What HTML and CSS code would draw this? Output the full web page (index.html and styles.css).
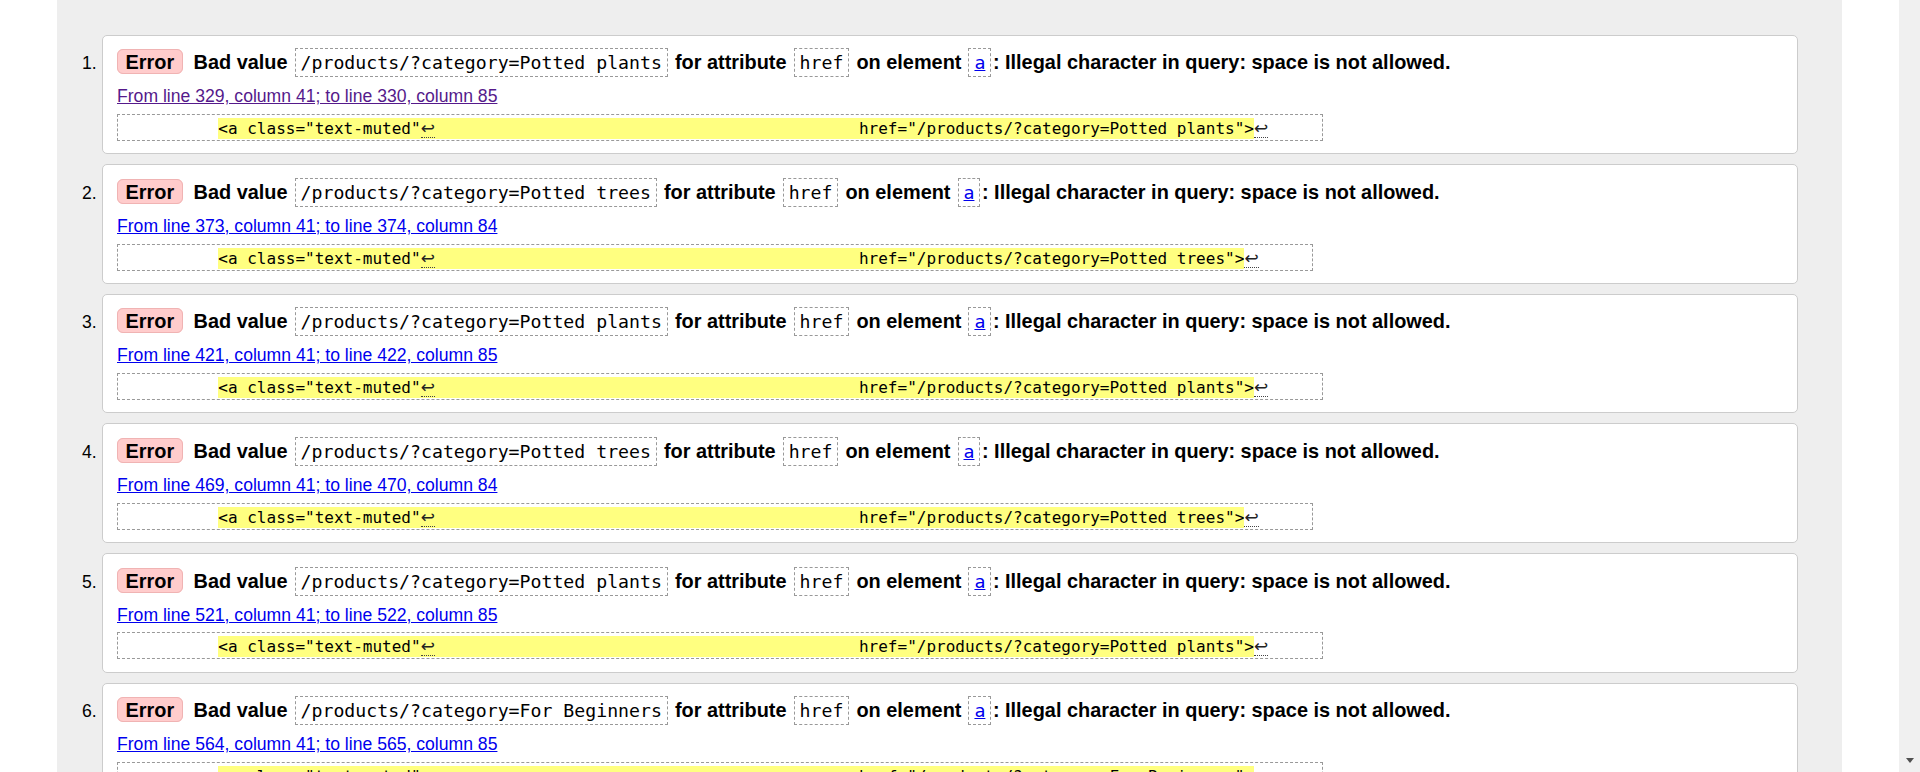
FILE: index.html
```html
<!DOCTYPE html>
<html lang="en">
<head>
<meta charset="utf-8">
<title>Nu Html Checker results</title>
<link rel="stylesheet" href="styles.css">
</head>
<body>
<div class="viewport">
  <div class="page">
    <div class="results">
      <ol class="msgs">
        <li class="msg">
          <p class="message"><span class="badge">Error</span> Bad value <code class="val">/products/?category=Potted plants</code> for attribute <code class="val">href</code> on element <code class="val"><a href="#">a</a></code>: Illegal character in query: space is not allowed.</p>
          <p class="location"><a class="loc visited" href="#">From line 329, column 41; to line 330, column 85</a></p>
          <code class="extract">          <mark>&lt;a class="text-muted"<span class="lf">↩</span>                                            href="/products/?category=Potted plants"&gt;</mark><span class="lf">↩</span>     </code>
        </li>
        <li class="msg">
          <p class="message"><span class="badge">Error</span> Bad value <code class="val">/products/?category=Potted trees</code> for attribute <code class="val">href</code> on element <code class="val"><a href="#">a</a></code>: Illegal character in query: space is not allowed.</p>
          <p class="location"><a class="loc" href="#">From line 373, column 41; to line 374, column 84</a></p>
          <code class="extract">          <mark>&lt;a class="text-muted"<span class="lf">↩</span>                                            href="/products/?category=Potted trees"&gt;</mark><span class="lf">↩</span>     </code>
        </li>
        <li class="msg">
          <p class="message"><span class="badge">Error</span> Bad value <code class="val">/products/?category=Potted plants</code> for attribute <code class="val">href</code> on element <code class="val"><a href="#">a</a></code>: Illegal character in query: space is not allowed.</p>
          <p class="location"><a class="loc" href="#">From line 421, column 41; to line 422, column 85</a></p>
          <code class="extract">          <mark>&lt;a class="text-muted"<span class="lf">↩</span>                                            href="/products/?category=Potted plants"&gt;</mark><span class="lf">↩</span>     </code>
        </li>
        <li class="msg">
          <p class="message"><span class="badge">Error</span> Bad value <code class="val">/products/?category=Potted trees</code> for attribute <code class="val">href</code> on element <code class="val"><a href="#">a</a></code>: Illegal character in query: space is not allowed.</p>
          <p class="location"><a class="loc" href="#">From line 469, column 41; to line 470, column 84</a></p>
          <code class="extract">          <mark>&lt;a class="text-muted"<span class="lf">↩</span>                                            href="/products/?category=Potted trees"&gt;</mark><span class="lf">↩</span>     </code>
        </li>
        <li class="msg">
          <p class="message"><span class="badge">Error</span> Bad value <code class="val">/products/?category=Potted plants</code> for attribute <code class="val">href</code> on element <code class="val"><a href="#">a</a></code>: Illegal character in query: space is not allowed.</p>
          <p class="location"><a class="loc" href="#">From line 521, column 41; to line 522, column 85</a></p>
          <code class="extract">          <mark>&lt;a class="text-muted"<span class="lf">↩</span>                                            href="/products/?category=Potted plants"&gt;</mark><span class="lf">↩</span>     </code>
        </li>
        <li class="msg">
          <p class="message"><span class="badge">Error</span> Bad value <code class="val">/products/?category=For Beginners</code> for attribute <code class="val">href</code> on element <code class="val"><a href="#">a</a></code>: Illegal character in query: space is not allowed.</p>
          <p class="location"><a class="loc" href="#">From line 564, column 41; to line 565, column 85</a></p>
          <code class="extract">          <mark>&lt;a class="text-muted"<span class="lf">↩</span>                                            href="/products/?category=For Beginners"&gt;</mark><span class="lf">↩</span>     </code>
        </li>
      </ol>
    </div>
  </div>
  <div class="scrollbar"><span class="arrow-down"></span></div>
</div>
</body>
</html>
```

FILE: styles.css
```css
html, body {
  margin: 0;
  padding: 0;
  background: #fff;
}

body {
  font-family: "Liberation Sans", Arial, sans-serif;
  color: #000;
}

.viewport {
  display: flex;
  height: 772px;
  overflow: hidden;
}

.page {
  flex: 0 0 1899px;
  height: 772px;
  overflow: hidden;
}

.results {
  margin-left: 57px;
  width: 1785px;
  height: 100%;
  box-sizing: border-box;
  padding: 34.67px 44.5px 0 44.5px;
  background: #eeeeee;
}

.msgs {
  margin: 0;
  padding: 0;
  list-style: decimal outside;
}

.msg {
  background: #fff;
  border: 1px solid #cccccc;
  border-radius: 5px;
  padding: 12.46px 14.5px 12.3px 14.5px;
  margin: 0 0 10px 0;
  font-size: 17.6px;
  line-height: 24px;
}

.message {
  margin: 0;
  font-size: 19.9px;
  font-weight: bold;
  line-height: 28px;
  white-space: nowrap;
}

.badge {
  background: #ffcccc;
  border: 1px solid #f0b3b3;
  border-radius: 6px;
  padding: 1px 7.5px 0 7.5px;
  margin-right: 5.4px;
}

.val {
  font-family: "DejaVu Sans Mono", "Liberation Mono", monospace;
  font-size: 18.2px;
  font-weight: normal;
  line-height: 1;
  border: 1px dashed #999;
  padding: 3px 5px;
  margin: 0 1.5px;
}

.val a {
  color: #0000ee;
  text-decoration: underline;
}

.location {
  margin: 8px 0 0 0;
  font-size: 17.6px;
  line-height: 24px;
}

.loc {
  color: #0000ee;
  text-decoration: underline;
}

.loc.visited {
  color: #551a8b;
}

.extract {
  display: block;
  width: fit-content;
  margin-top: 5.87px;
  font-family: "DejaVu Sans Mono", "Liberation Mono", monospace;
  font-size: 16px;
  line-height: 21px;
  white-space: pre;
  border: 1px dashed #999;
  padding: 3px 5px 1px 4px;
}

.extract mark {
  background: #ffff80;
  color: #000;
  padding: 1px 0;
}

.lf {
  display: inline-block;
  width: 14.5px;
  line-height: 18px;
  text-align: center;
  font-family: "DejaVu Sans", sans-serif;
  font-size: 17px;
  color: #222;
  border-bottom: 1px dotted #444;
}

.scrollbar {
  flex: 0 0 21px;
  height: 772px;
  background: #f0f0f0;
  display: flex;
  flex-direction: column;
  justify-content: flex-end;
  align-items: center;
  padding-bottom: 9px;
  box-sizing: border-box;
}

.arrow-down {
  width: 0;
  height: 0;
  border-left: 4.5px solid transparent;
  border-right: 4.5px solid transparent;
  border-top: 5px solid #505050;
}
```
